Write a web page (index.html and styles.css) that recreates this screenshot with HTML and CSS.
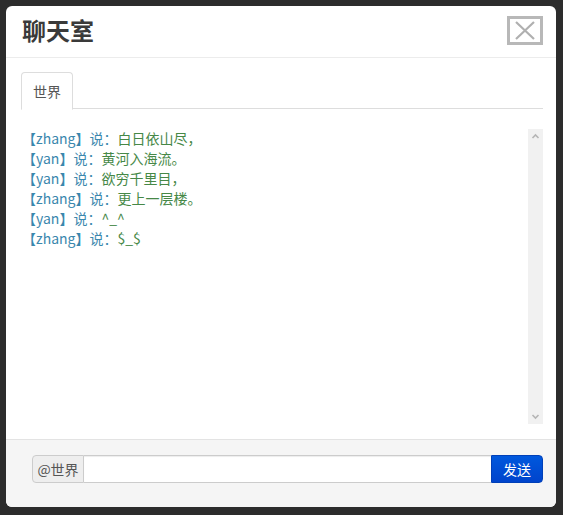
FILE: index.html
```html
<!DOCTYPE html>
<html lang="zh-CN">
<head>
<meta charset="utf-8">
<title>聊天室</title>
<link rel="stylesheet" href="styles.css">
</head>
<body>
<div class="modal">
  <div class="modal-header">
    <h3 class="title">聊天室</h3>
    <button class="close" type="button" aria-label="关闭">
      <svg width="36" height="29" viewBox="0 0 36 29">
        <rect x="1.5" y="1.5" width="33" height="26" fill="#fff" stroke="#b8b8b8" stroke-width="3"/>
        <path d="M9 6 L27 23 M27 6 L9 23" stroke="#b0b0b0" stroke-width="2.2" fill="none"/>
      </svg>
    </button>
  </div>
  <div class="modal-body">
    <ul class="tabs">
      <li class="tab active">世界</li>
    </ul>
    <div class="chat">
      <div class="messages">
        <div class="msg"><span class="who">【zhang】说：</span><span class="text">白日依山尽，</span></div>
        <div class="msg"><span class="who">【yan】说：</span><span class="text">黄河入海流。</span></div>
        <div class="msg"><span class="who">【yan】说：</span><span class="text">欲穷千里目，</span></div>
        <div class="msg"><span class="who">【zhang】说：</span><span class="text">更上一层楼。</span></div>
        <div class="msg"><span class="who">【yan】说：</span><span class="text">^_^</span></div>
        <div class="msg"><span class="who">【zhang】说：</span><span class="text">$_$</span></div>
      </div>
      <div class="scrollbar">
        <svg width="15" height="14" viewBox="0 0 15 14"><path d="M4.5 9 L7.5 6 L10.5 9" stroke="#b5b5b5" stroke-width="1.6" fill="none"/></svg>
        <svg width="15" height="14" viewBox="0 0 15 14"><path d="M4.5 5 L7.5 8 L10.5 5" stroke="#b5b5b5" stroke-width="1.6" fill="none"/></svg>
      </div>
    </div>
  </div>
  <div class="modal-footer">
    <div class="input-group">
      <span class="addon">@世界</span>
      <input class="field" type="text">
      <button class="send" type="button">发送</button>
    </div>
  </div>
</div>
</body>
</html>
```

FILE: styles.css
```css
html, body {
  margin: 0;
  padding: 0;
}
body {
  background: #2c2c2c;
  padding: 6px;
  width: 563px;
  height: 515px;
  box-sizing: border-box;
  font-family: "Noto Sans CJK SC", "Noto Sans", sans-serif;
  font-size: 14px;
}
.modal {
  width: 550px;
  height: 501px;
  background: #fff;
  border-radius: 6px;
  display: flex;
  flex-direction: column;
  overflow: hidden;
}
.modal-header {
  height: 51px;
  border-bottom: 1px solid #ececec;
  display: flex;
  align-items: center;
  justify-content: space-between;
  padding: 0 13px 0 16px;
  box-sizing: content-box;
}
.title {
  margin: 0;
  font-size: 24px;
  font-weight: 700;
  color: #3a3a3a;
  line-height: 30px;
  margin-top: -3px;
}
.close {
  border: 0;
  background: none;
  padding: 0;
  width: 36px;
  height: 29px;
  display: block;
  margin-top: -3px;
}
.close svg { display: block; }
.modal-body {
  padding: 14px 13px 14px 15px;
  display: flex;
  flex-direction: column;
}
.tabs {
  list-style: none;
  margin: 0;
  padding: 0;
  display: flex;
  border-bottom: 1px solid #ddd;
  height: 36px;
}
.tab {
  width: 50px;
  height: 36px;
  border: 1px solid #ddd;
  border-bottom-color: transparent;
  border-radius: 4px 4px 0 0;
  background: #fff;
  color: #555;
  text-align: center;
  line-height: 36px;
  font-size: 14px;
  margin-bottom: -1px;
}
.chat {
  margin-top: 19px;
  height: 297px;
  display: flex;
}
.messages {
  flex: 1;
  padding-left: 1px;
}
.msg {
  line-height: 20px;
  height: 20px;
  font-size: 14px;
  white-space: nowrap;
}
.who { color: #3a87ad; }
.text { color: #468847; }
.scrollbar {
  width: 15px;
  margin-top: 1px;
  height: 295px;
  background: #f1f1f1;
  display: flex;
  flex-direction: column;
  justify-content: space-between;
}
.scrollbar svg { display: block; }
.modal-footer {
  flex: 1;
  background: #f5f5f5;
  border-top: 1px solid #e3e3e3;
  padding: 15px 13px 0 26px;
}
.input-group {
  display: flex;
  height: 28px;
}
.addon {
  width: 50px;
  height: 26px;
  border: 1px solid #ccc;
  border-radius: 4px 0 0 4px;
  background: #eee;
  color: #555;
  line-height: 26px;
  text-align: center;
  font-size: 14px;
}
.field {
  flex: 1;
  height: 28px;
  box-sizing: border-box;
  border: 1px solid #ccc;
  border-left: 0;
  border-right: 0;
  margin: 0;
  padding: 0 6px;
  background: #fff;
  outline: none;
  box-shadow: inset 0 1px 1px rgba(0,0,0,0.075);
}
.send {
  width: 52px;
  height: 28px;
  margin: 0;
  border: 1px solid #0040b8;
  border-radius: 0 4px 4px 0;
  background: linear-gradient(#0058dd, #0044cc);
  color: #fff;
  font-family: "Noto Sans CJK SC", sans-serif;
  font-size: 14px;
  line-height: 26px;
  padding: 0;
}
```
